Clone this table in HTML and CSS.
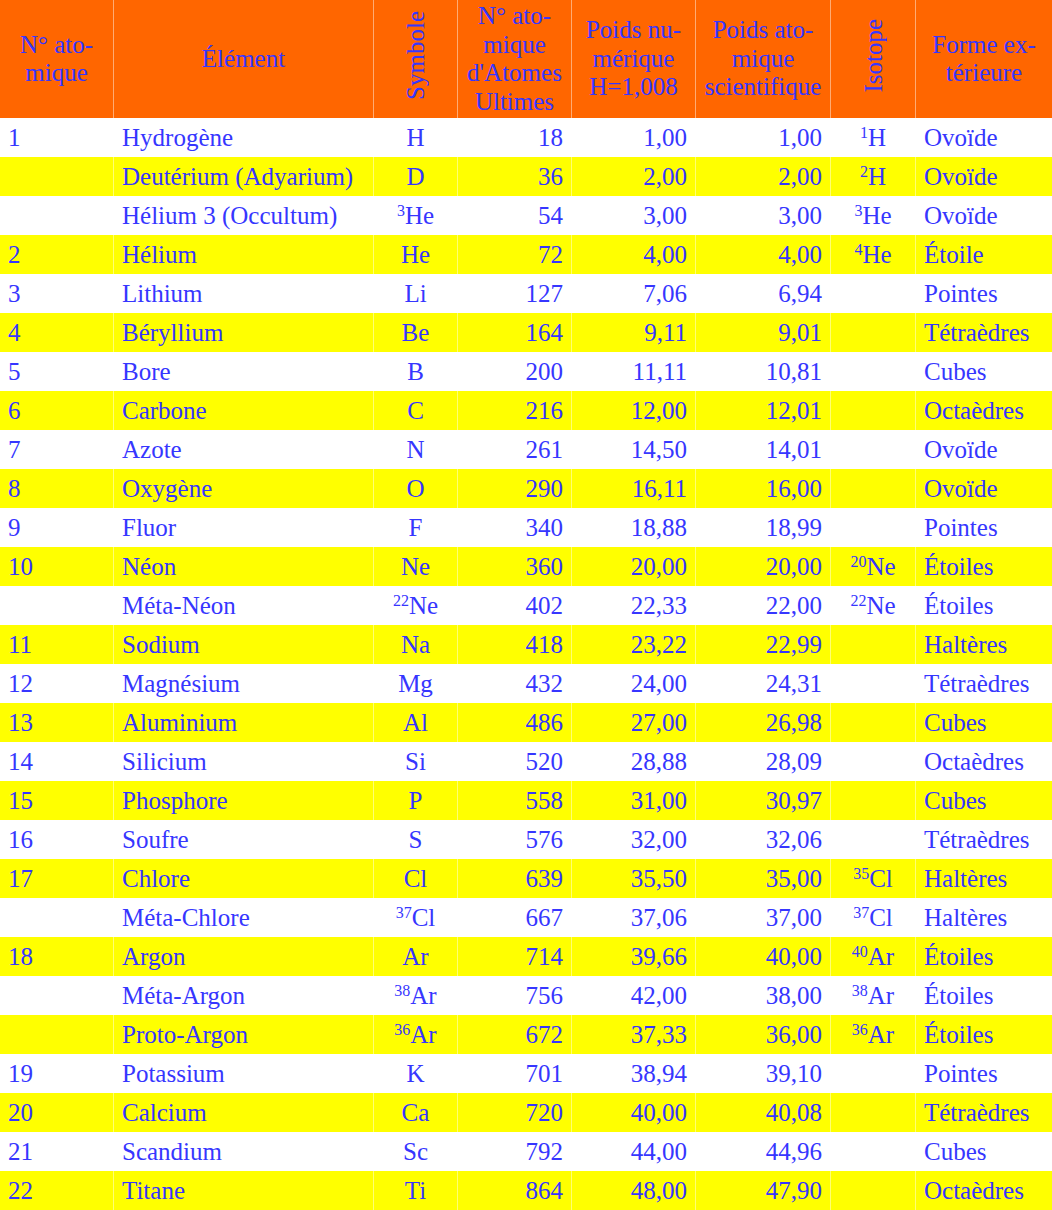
FILE: index.html
```html
<!DOCTYPE html>
<html lang="fr">
<head>
<meta charset="utf-8">
<title>Tableau des éléments</title>
<link rel="stylesheet" href="styles.css">
</head>
<body>
<table class="elements">
  <colgroup>
    <col class="c-num"><col class="c-name"><col class="c-sym"><col class="c-ult">
    <col class="c-pn"><col class="c-pa"><col class="c-iso"><col class="c-forme">
  </colgroup>
  <thead>
    <tr class="head">
      <th>N° ato-<br>mique</th>
      <th>Élément</th>
      <th class="rot-cell"><span class="rot">Symbole</span></th>
      <th>N° ato-<br>mique<br>d'Atomes<br>Ultimes</th>
      <th>Poids nu-<br>mérique<br>H=1,008</th>
      <th>Poids ato-<br>mique<br>scientifique</th>
      <th class="rot-cell"><span class="rot">Isotope</span></th>
      <th>Forme ex-<br>térieure</th>
    </tr>
  </thead>
  <tbody>
    <tr><td>1</td><td>Hydrogène</td><td class="ctr">H</td><td class="num">18</td><td class="num">1,00</td><td class="num">1,00</td><td class="ctr"><sup>1</sup>H</td><td>Ovoïde</td></tr>
    <tr class="alt"><td></td><td>Deutérium (Adyarium)</td><td class="ctr">D</td><td class="num">36</td><td class="num">2,00</td><td class="num">2,00</td><td class="ctr"><sup>2</sup>H</td><td>Ovoïde</td></tr>
    <tr><td></td><td>Hélium 3 (Occultum)</td><td class="ctr"><sup>3</sup>He</td><td class="num">54</td><td class="num">3,00</td><td class="num">3,00</td><td class="ctr"><sup>3</sup>He</td><td>Ovoïde</td></tr>
    <tr class="alt"><td>2</td><td>Hélium</td><td class="ctr">He</td><td class="num">72</td><td class="num">4,00</td><td class="num">4,00</td><td class="ctr"><sup>4</sup>He</td><td>Étoile</td></tr>
    <tr><td>3</td><td>Lithium</td><td class="ctr">Li</td><td class="num">127</td><td class="num">7,06</td><td class="num">6,94</td><td class="ctr"></td><td>Pointes</td></tr>
    <tr class="alt"><td>4</td><td>Béryllium</td><td class="ctr">Be</td><td class="num">164</td><td class="num">9,11</td><td class="num">9,01</td><td class="ctr"></td><td>Tétraèdres</td></tr>
    <tr><td>5</td><td>Bore</td><td class="ctr">B</td><td class="num">200</td><td class="num">11,11</td><td class="num">10,81</td><td class="ctr"></td><td>Cubes</td></tr>
    <tr class="alt"><td>6</td><td>Carbone</td><td class="ctr">C</td><td class="num">216</td><td class="num">12,00</td><td class="num">12,01</td><td class="ctr"></td><td>Octaèdres</td></tr>
    <tr><td>7</td><td>Azote</td><td class="ctr">N</td><td class="num">261</td><td class="num">14,50</td><td class="num">14,01</td><td class="ctr"></td><td>Ovoïde</td></tr>
    <tr class="alt"><td>8</td><td>Oxygène</td><td class="ctr">O</td><td class="num">290</td><td class="num">16,11</td><td class="num">16,00</td><td class="ctr"></td><td>Ovoïde</td></tr>
    <tr><td>9</td><td>Fluor</td><td class="ctr">F</td><td class="num">340</td><td class="num">18,88</td><td class="num">18,99</td><td class="ctr"></td><td>Pointes</td></tr>
    <tr class="alt"><td>10</td><td>Néon</td><td class="ctr">Ne</td><td class="num">360</td><td class="num">20,00</td><td class="num">20,00</td><td class="ctr"><sup>20</sup>Ne</td><td>Étoiles</td></tr>
    <tr><td></td><td>Méta-Néon</td><td class="ctr"><sup>22</sup>Ne</td><td class="num">402</td><td class="num">22,33</td><td class="num">22,00</td><td class="ctr"><sup>22</sup>Ne</td><td>Étoiles</td></tr>
    <tr class="alt"><td>11</td><td>Sodium</td><td class="ctr">Na</td><td class="num">418</td><td class="num">23,22</td><td class="num">22,99</td><td class="ctr"></td><td>Haltères</td></tr>
    <tr><td>12</td><td>Magnésium</td><td class="ctr">Mg</td><td class="num">432</td><td class="num">24,00</td><td class="num">24,31</td><td class="ctr"></td><td>Tétraèdres</td></tr>
    <tr class="alt"><td>13</td><td>Aluminium</td><td class="ctr">Al</td><td class="num">486</td><td class="num">27,00</td><td class="num">26,98</td><td class="ctr"></td><td>Cubes</td></tr>
    <tr><td>14</td><td>Silicium</td><td class="ctr">Si</td><td class="num">520</td><td class="num">28,88</td><td class="num">28,09</td><td class="ctr"></td><td>Octaèdres</td></tr>
    <tr class="alt"><td>15</td><td>Phosphore</td><td class="ctr">P</td><td class="num">558</td><td class="num">31,00</td><td class="num">30,97</td><td class="ctr"></td><td>Cubes</td></tr>
    <tr><td>16</td><td>Soufre</td><td class="ctr">S</td><td class="num">576</td><td class="num">32,00</td><td class="num">32,06</td><td class="ctr"></td><td>Tétraèdres</td></tr>
    <tr class="alt"><td>17</td><td>Chlore</td><td class="ctr">Cl</td><td class="num">639</td><td class="num">35,50</td><td class="num">35,00</td><td class="ctr"><sup>35</sup>Cl</td><td>Haltères</td></tr>
    <tr><td></td><td>Méta-Chlore</td><td class="ctr"><sup>37</sup>Cl</td><td class="num">667</td><td class="num">37,06</td><td class="num">37,00</td><td class="ctr"><sup>37</sup>Cl</td><td>Haltères</td></tr>
    <tr class="alt"><td>18</td><td>Argon</td><td class="ctr">Ar</td><td class="num">714</td><td class="num">39,66</td><td class="num">40,00</td><td class="ctr"><sup>40</sup>Ar</td><td>Étoiles</td></tr>
    <tr><td></td><td>Méta-Argon</td><td class="ctr"><sup>38</sup>Ar</td><td class="num">756</td><td class="num">42,00</td><td class="num">38,00</td><td class="ctr"><sup>38</sup>Ar</td><td>Étoiles</td></tr>
    <tr class="alt"><td></td><td>Proto-Argon</td><td class="ctr"><sup>36</sup>Ar</td><td class="num">672</td><td class="num">37,33</td><td class="num">36,00</td><td class="ctr"><sup>36</sup>Ar</td><td>Étoiles</td></tr>
    <tr><td>19</td><td>Potassium</td><td class="ctr">K</td><td class="num">701</td><td class="num">38,94</td><td class="num">39,10</td><td class="ctr"></td><td>Pointes</td></tr>
    <tr class="alt"><td>20</td><td>Calcium</td><td class="ctr">Ca</td><td class="num">720</td><td class="num">40,00</td><td class="num">40,08</td><td class="ctr"></td><td>Tétraèdres</td></tr>
    <tr><td>21</td><td>Scandium</td><td class="ctr">Sc</td><td class="num">792</td><td class="num">44,00</td><td class="num">44,96</td><td class="ctr"></td><td>Cubes</td></tr>
    <tr class="alt"><td>22</td><td>Titane</td><td class="ctr">Ti</td><td class="num">864</td><td class="num">48,00</td><td class="num">47,90</td><td class="ctr"></td><td>Octaèdres</td></tr>
  </tbody>
</table>
</body>
</html>
```
FILE: styles.css
```css
html, body {
  margin: 0;
  padding: 0;
  background: #ffffff;
}

body {
  font-family: "Liberation Serif", "Times New Roman", Times, serif;
  font-size: 25px;
  color: #3636ff;
}

.elements {
  width: 1052px;
  table-layout: fixed;
  border-collapse: separate;
  border-spacing: 0;
  font-family: "Liberation Serif", "Times New Roman", Times, serif;
}

.c-num { width: 113px; }
.c-name { width: 260px; }
.c-sym { width: 84px; }
.c-ult { width: 114px; }
.c-pn { width: 124px; }
.c-pa { width: 135px; }
.c-iso { width: 85px; }
.c-forme { width: 137px; }

.elements th,
.elements td {
  border-left: 1px solid rgba(255, 255, 255, 0.45);
  vertical-align: middle;
  line-height: 28.5px;
  white-space: nowrap;
  overflow: hidden;
}

.elements td {
  padding: 2px 8px 0 8px;
}

.elements th:first-child,
.elements td:first-child {
  border-left: none;
}

.head {
  height: 118px;
  background: #ff6600;
}

.head th {
  font-weight: normal;
  text-align: center;
  padding: 0 2px;
}

.rot-cell {
  text-align: center;
}

.rot {
  display: inline-block;
  writing-mode: vertical-rl;
  transform: rotate(180deg);
  line-height: 25px;
}

tbody tr {
  height: 39px;
}

tbody tr.alt {
  background: #ffff00;
}

.num {
  text-align: right;
}

.ctr {
  text-align: center;
}

sup {
  font-size: 16px;
  line-height: 0;
  vertical-align: 8px;
}
```
